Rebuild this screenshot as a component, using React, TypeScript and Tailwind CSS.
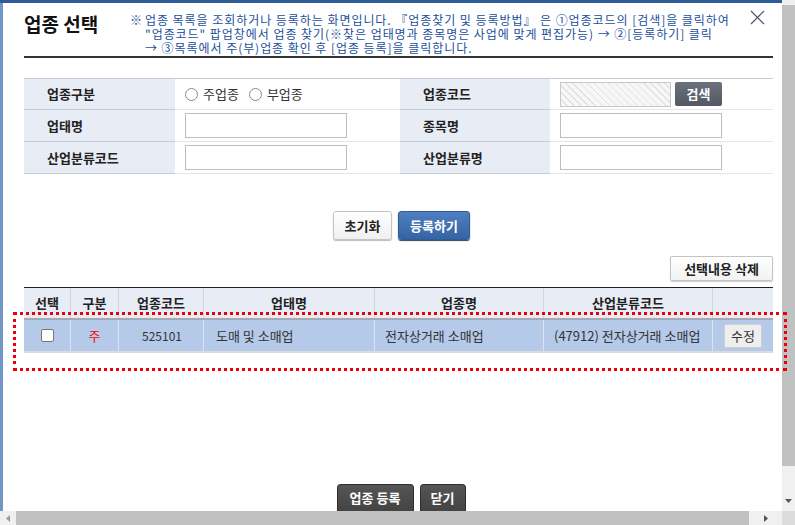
import React from 'react';

const FONT = "font-['Noto_Sans_CJK_KR','Noto_Sans',sans-serif]";

const Label: React.FC<{ children: React.ReactNode; first?: boolean }> = ({ children, first }) => (
  <div
    className={
      (first ? 'h-[31px] ' : 'h-[32px] ') +
      'flex items-center pl-[23px] bg-[#e7ecf5] text-[13px] font-bold text-[#222] border-b border-[#c3cdda]'
    }
  >
    {children}
  </div>
);

const Value: React.FC<{ children?: React.ReactNode }> = ({ children }) => (
  <div className="flex items-center pl-[10px] border-b border-[#e3e6ea]">{children}</div>
);

const TextBox: React.FC = () => (
  <div className="w-[162px] h-[25px] border border-[#bdbdbd] bg-white" />
);

const Radio: React.FC<{ label: string }> = ({ label }) => (
  <label className="flex items-center gap-[5px] mr-[10px]">
    <span className="w-[13px] h-[13px] rounded-full border border-[#8a8a8a] bg-white" />
    <span className="text-[13px] text-[#333]">{label}</span>
  </label>
);

const COLS = 'grid grid-cols-[47px_48px_85px_171px_169px_169px_60px]';

const App: React.FC = () => {
  return (
    <div className={`relative w-[795px] h-[525px] overflow-hidden bg-white ${FONT}`}>
      <div className="flex h-[511px]">
        {/* window body */}
        <div className="flex flex-col w-[782px]">
          <div className="h-[3px] bg-[#2f5b97]" />
          <div className="flex flex-1">
            <div className="w-[3px] bg-[#7196c6]" />
            <div className="flex flex-col flex-1 pl-[21px] pr-[9px]">
              {/* header */}
              <div className="relative flex h-[53px] pt-[9px]">
                <div className="w-[106px] text-[19px] font-bold text-[#111] leading-[24px]">
                  업종 선택
                </div>
                <div className="flex text-[12px] leading-[14px] tracking-[0.95px] text-[#1b4f9c] pt-[1px]">
                  <span className="w-[15px] tracking-normal">※</span>
                  <div className="flex flex-col whitespace-nowrap">
                    <span>업종 목록을 조회하거나 등록하는 화면입니다. 『업종찾기 및 등록방법』 은 ①업종코드의 [검색]을 클릭하여</span>
                    <span>"업종코드" 팝업창에서 업종 찾기(※찾은 업태명과 종목명은 사업에 맞게 편집가능) → ②[등록하기] 클릭</span>
                    <span>→ ③목록에서 주(부)업종 확인 후 [업종 등록]을 클릭합니다.</span>
                  </div>
                </div>
                <svg className="absolute right-[8px] top-[7px]" width="15" height="15" viewBox="0 0 15 15">
                  <path d="M1 1 L14 14 M14 1 L1 14" stroke="#4b5568" strokeWidth="1.2" />
                </svg>
              </div>
              <div className="h-[2px] bg-[#333]" />

              {/* search form */}
              <div className="mt-[20px] grid grid-cols-[151px_225px_150px_223px] border-t border-[#c3cdda]">
                <Label first>업종구분</Label>
                <Value>
                  <Radio label="주업종" />
                  <Radio label="부업종" />
                </Value>
                <Label first>업종코드</Label>
                <Value>
                  <div className="w-[111px] h-[25px] border border-[#c8c8c8] bg-[repeating-linear-gradient(45deg,#f7f7f7_0px,#f7f7f7_4px,#e2e2e2_4px,#e2e2e2_5px)]" />
                  <button className="ml-[4px] w-[47px] h-[24px] rounded-[2px] bg-gradient-to-b from-[#6a707c] to-[#525864] text-white text-[13px] font-bold">
                    검색
                  </button>
                </Value>
                <Label>업태명</Label>
                <Value>
                  <TextBox />
                </Value>
                <Label>종목명</Label>
                <Value>
                  <TextBox />
                </Value>
                <Label>산업분류코드</Label>
                <Value>
                  <TextBox />
                </Value>
                <Label>산업분류명</Label>
                <Value>
                  <TextBox />
                </Value>
              </div>

              {/* action buttons */}
              <div className="mt-[37px] flex justify-center gap-[6px] pl-[6px]">
                <button className="w-[59px] h-[29px] rounded-[3px] border border-[#c4c4c4] bg-gradient-to-b from-white to-[#f0f0f0] shadow-[0_1px_1px_#bbb] text-[13px] font-bold text-[#222]">
                  초기화
                </button>
                <button className="w-[72px] h-[29px] rounded-[3px] border border-[#2f5d99] bg-gradient-to-b from-[#4f7fc0] to-[#3564a5] shadow-[0_1px_1px_#345] text-[13px] font-bold text-white">
                  등록하기
                </button>
              </div>

              <div className="mt-[16px] flex justify-end">
                <button className="w-[103px] h-[25px] rounded-[2px] border border-[#c4c4c4] bg-gradient-to-b from-white to-[#f2f2f2] shadow-[0_1px_1px_#ccc] text-[13px] font-bold text-[#222]">
                  선택내용 삭제
                </button>
              </div>

              {/* list table */}
              <div className="mt-[6px] border-t border-[#222]">
                <div className={`${COLS} h-[32px] bg-[#e7ecf5] text-[13px] font-bold text-[#222] border-b-2 border-[#a6a9ae]`}>
                  {['선택', '구분', '업종코드', '업태명', '업종명', '산업분류코드', ''].map((h, i) => (
                    <div
                      key={i}
                      className={'flex items-center justify-center ' + (i < 6 ? 'border-r border-[#cfd5de]' : '')}
                    >
                      {h}
                    </div>
                  ))}
                </div>
                <div className={`${COLS} h-[33px] bg-[#b5c9e8] text-[13px] text-[#333] border-b-2 border-[#dcdcdc]`}>
                  <div className="flex items-center justify-center border-r border-[#dde3ec]">
                    <span className="w-[13px] h-[13px] rounded-[2px] border border-[#777] bg-white" />
                  </div>
                  <div className="flex items-center justify-center border-r border-[#dde3ec] text-[#f00]">주</div>
                  <div className="flex items-center justify-center border-r border-[#dde3ec] text-[12px] pl-[2px]">525101</div>
                  <div className="flex items-center pl-[12px] border-r border-[#dde3ec]">도매 및 소매업</div>
                  <div className="flex items-center pl-[10px] border-r border-[#dde3ec]">전자상거래 소매업</div>
                  <div className="flex items-center pl-[10px] border-r border-[#dde3ec]">(47912) 전자상거래 소매업</div>
                  <div className="flex items-center justify-center">
                    <button className="w-[38px] h-[24px] rounded-[2px] border border-[#cfcfcf] bg-[#eeeeee] text-[13px] text-[#333]">
                      수정
                    </button>
                  </div>
                </div>
              </div>

              {/* bottom buttons */}
              <div className="mt-auto flex justify-center gap-[6px] pl-[5px]">
                <button className="w-[77px] h-[27px] rounded-t-[4px] border border-b-0 border-[#2e2e2e] bg-gradient-to-b from-[#555] to-[#444] text-[13px] font-bold text-white">
                  업종 등록
                </button>
                <button className="w-[46px] h-[27px] rounded-t-[4px] border border-b-0 border-[#2e2e2e] bg-gradient-to-b from-[#555] to-[#444] text-[13px] font-bold text-white">
                  닫기
                </button>
              </div>
            </div>
          </div>
        </div>

        {/* vertical scrollbar */}
        <div className="flex flex-col w-[13px] bg-[#f0f0f0]">
          <div className="h-[5px]" />
          <div className="h-[461px] bg-[#c1c1c1]" />
          <div className="flex flex-1 items-end justify-center pb-[8px]">
            <svg width="7" height="4" viewBox="0 0 7 4">
              <path d="M0 0 L7 0 L3.5 4 Z" fill="#555" />
            </svg>
          </div>
        </div>
      </div>

      {/* horizontal scrollbar */}
      <div className="flex h-[14px] bg-[#f0f0f0]">
        <div className="w-[16px] flex items-center justify-center">
          <svg width="4" height="7" viewBox="0 0 4 7">
            <path d="M4 0 L4 7 L0 3.5 Z" fill="#9a9a9a" />
          </svg>
        </div>
        <div className="w-[733px] bg-[#c1c1c1]" />
        <div className="flex-1 flex items-center justify-center">
          <svg width="4" height="7" viewBox="0 0 4 7">
            <path d="M0 0 L0 7 L4 3.5 Z" fill="#555" />
          </svg>
        </div>
        <div className="w-[13px] bg-[#dcdcdc]" />
      </div>

      {/* highlight annotation */}
      <div className="absolute left-[13px] top-[312px] w-[774px] h-[59px] border-[3px] border-dotted border-[#e8000b]" />
    </div>
  );
};

export default App;
